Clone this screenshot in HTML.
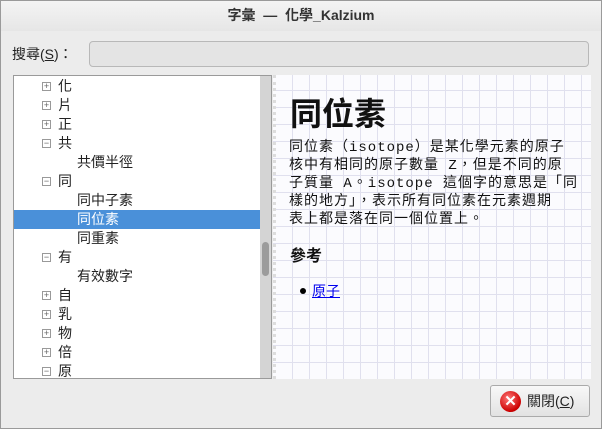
<!DOCTYPE html>
<html><head><meta charset="utf-8"><style>
*{margin:0;padding:0;box-sizing:border-box}
body{width:602px;height:429px;background:#ececec;font-family:"Liberation Sans","Noto Sans CJK TC",sans-serif;position:relative;overflow:hidden;border:1px solid #9a9a9a}
.title{position:absolute;left:0;top:0;width:600px;height:30px;background:linear-gradient(#f4f4f4,#e6e6e6);text-align:center;font-weight:bold;font-size:14px;line-height:28px;color:#333;white-space:pre}
.lbl{position:absolute;left:11px;top:43px;font-size:14px;color:#222}
.inp{position:absolute;left:88px;top:40px;width:500px;height:26px;border:1px solid #b8b8b8;border-radius:4px;background:#e4e4e4}
.tree{position:absolute;left:12px;top:74px;width:259px;height:304px;background:#fff;border:1px solid #9a9a9a;overflow:hidden}
.row{position:absolute;left:0;width:246px;height:19px;font-size:14px;line-height:19px;color:#222}
.row .e{position:absolute;left:28px;top:5px;width:9px;height:9px;border:1px solid #999;font-size:9px;line-height:7px;text-align:center;color:#666}
.row .t{position:absolute;left:44px}
.row .c{position:absolute;left:63px}
.sel{background:#4a90d9;color:#fff}
.sb{position:absolute;left:246px;top:0;width:12px;height:304px;background:#d4d4d4}
.thumb{position:absolute;left:2px;top:166px;width:7px;height:34px;border-radius:4px;background:#9c9c9c}
.right{position:absolute;left:272px;top:74px;width:318px;height:304px;background-color:#fbfbfe;
background-image:repeating-linear-gradient(90deg,transparent 0 16px,#e0e0ee 16px 17px),repeating-linear-gradient(0deg,transparent 0 16px,#e0e0ee 16px 17px);border-left:3px dotted #ddd}
h1{position:absolute;left:14px;top:14px;font-size:32px;font-weight:bold;color:#111}
.p{position:absolute;left:13px;top:64px;font-size:14px;letter-spacing:1px;line-height:18px;color:#111;font-family:"Liberation Mono","Noto Sans CJK TC",monospace;white-space:nowrap}
h3{position:absolute;left:14px;top:167px;font-size:16px;font-weight:bold;color:#111}
.li{position:absolute;left:36px;top:206px;font-size:14px}
.li:before{content:"";position:absolute;left:-12px;top:7px;width:6px;height:6px;border-radius:50%;background:#000}
.li a{color:#00e;text-decoration:underline}
.btn{position:absolute;left:489px;top:384px;width:100px;height:32px;border:1px solid #aaa;border-radius:3px;background:linear-gradient(#f8f8f8,#e2e2e2);font-size:14px;line-height:30px;color:#222}
.ic{position:absolute;left:9px;top:5px;width:21px;height:21px;border-radius:50%;background:radial-gradient(circle at 40% 35%,#f77,#c00 70%,#800);color:#fff;font-weight:bold;text-align:center;font-size:15px;line-height:21px}
</style></head><body>
<div class="title">字彙  —  化學_Kalzium</div>
<div class="lbl">搜尋(<u>S</u>)：</div>
<div class="inp"></div>
<div class="tree">
<div class="row" style="top:1px"><span class="e">+</span><span class="t">化</span></div>
<div class="row" style="top:20px"><span class="e">+</span><span class="t">片</span></div>
<div class="row" style="top:39px"><span class="e">+</span><span class="t">正</span></div>
<div class="row" style="top:58px"><span class="e">−</span><span class="t">共</span></div>
<div class="row" style="top:77px"><span class="c">共價半徑</span></div>
<div class="row" style="top:96px"><span class="e">−</span><span class="t">同</span></div>
<div class="row" style="top:115px"><span class="c">同中子素</span></div>
<div class="row sel" style="top:134px"><span class="c">同位素</span></div>
<div class="row" style="top:153px"><span class="c">同重素</span></div>
<div class="row" style="top:172px"><span class="e">−</span><span class="t">有</span></div>
<div class="row" style="top:191px"><span class="c">有效數字</span></div>
<div class="row" style="top:210px"><span class="e">+</span><span class="t">自</span></div>
<div class="row" style="top:229px"><span class="e">+</span><span class="t">乳</span></div>
<div class="row" style="top:248px"><span class="e">+</span><span class="t">物</span></div>
<div class="row" style="top:267px"><span class="e">+</span><span class="t">倍</span></div>
<div class="row" style="top:286px"><span class="e">−</span><span class="t">原</span></div>
<div class="sb"><div class="thumb"></div></div>
</div>
<div class="right">
<h1>同位素</h1>
<div class="p">同位素（isotope）是某化學元素的原子<br>核中有相同的原子數量 Z，但是不同的原<br>子質量 A。isotope 這個字的意思是「同<br>樣的地方」，表示所有同位素在元素週期<br>表上都是落在同一個位置上。</div>
<h3>參考</h3>
<div class="li"><a>原子</a></div>
</div>
<div class="btn"><span class="ic">✕</span><span style="position:absolute;left:36px">關閉(<u>C</u>)</span></div>
</body></html>
